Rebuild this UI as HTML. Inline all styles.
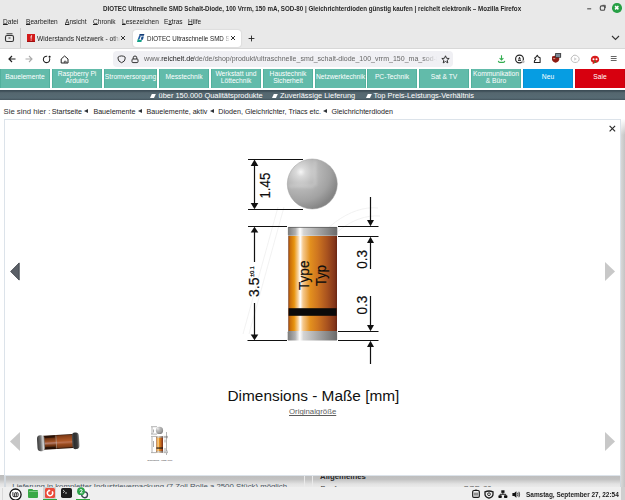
<!DOCTYPE html>
<html><head><meta charset="utf-8">
<style>
*{margin:0;padding:0;box-sizing:border-box}
html,body{width:625px;height:500px;overflow:hidden;background:#fff;font-family:"Liberation Sans",sans-serif}
.a{position:absolute}
.t{position:absolute;white-space:nowrap;line-height:1}
#chrome{left:0;top:0;width:625px;height:49px;background:#e9e9e9}
.menu{font-size:7.3px;color:#222;top:17.7px;transform-origin:0 0;transform:scaleX(0.9)}
.menu u{text-decoration:underline;text-underline-offset:0.2px;text-decoration-thickness:0.7px;text-decoration-skip-ink:none}
.sq{width:4px;height:3.6px;background:#fff;transform:skewX(-25deg)}
.usp{top:92px;font-size:7.45px;color:#fff}
.bc{top:108.5px;font-size:7.15px;color:#1c1c1c}
.tri{position:absolute;top:109px;width:0;height:0;border-top:2.45px solid transparent;border-bottom:2.45px solid transparent;border-right:4.7px solid #2e3338}
.nb{position:absolute;top:69px;height:19px;background:#62bbaa;border-left:1px solid #52b09d;border-right:1px solid #52b09d;color:#fff;font-size:6.7px;text-align:center;line-height:6.5px;display:flex;align-items:center;justify-content:center;padding-bottom:2px}
</style></head><body>

<!-- browser chrome -->
<div class="a" id="chrome"></div>
<div class="t" style="left:103px;top:4.5px;font-size:7px;font-weight:bold;color:#262626;transform-origin:0 0;transform:scaleX(0.886)">DIOTEC Ultraschnelle SMD Schalt-Diode, 100 Vrrm, 150 mA, SOD-80 | Gleichrichterdioden günstig kaufen | reichelt elektronik – Mozilla Firefox</div>
<!-- window controls -->
<svg class="a" style="left:585px;top:4px" width="36" height="10">
<path d="M2.2 4.8H6.2" stroke="#5a5a5a" stroke-width="1.2"/>
<rect x="15.3" y="1.9" width="4.4" height="4.4" rx="1.3" fill="none" stroke="#4a4a4a" stroke-width="1.1"/><path d="M17.5 1.3H20.3V4" fill="none" stroke="#4a4a4a" stroke-width="0.9"/>
</svg>
<div class="a" style="left:612px;top:3.2px;width:9.5px;height:9.5px;border-radius:50%;background:#27a045"></div>
<svg class="a" style="left:612px;top:3.2px" width="10" height="10"><path d="M3.1 3.1L6.4 6.4M6.4 3.1L3.1 6.4" stroke="#fff" stroke-width="1.5"/></svg>

<!-- menu -->
<div class="t menu" style="left:3px"><u>D</u>atei</div>
<div class="t menu" style="left:25.5px"><u>B</u>earbeiten</div>
<div class="t menu" style="left:64.5px"><u>A</u>nsicht</div>
<div class="t menu" style="left:92.5px"><u>C</u>hronik</div>
<div class="t menu" style="left:122px"><u>L</u>esezeichen</div>
<div class="t menu" style="left:164px">E<u>x</u>tras</div>
<div class="t menu" style="left:188px"><u>H</u>ilfe</div>

<!-- tab bar -->
<svg class="a" style="left:4px;top:32px" width="12" height="12"><rect x="1.5" y="3.5" width="8" height="6" rx="1.5" fill="none" stroke="#333" stroke-width="1.1"/><path d="M2.5 1.8H8.5" stroke="#333" stroke-width="1"/><path d="M4.5 6H6.5" stroke="#333" stroke-width="1"/></svg>
<div class="a" style="left:20px;top:28px;width:1px;height:20px;background:#c8c8c8"></div>
<div class="a" style="left:27px;top:34px;width:8px;height:8px;background:#d31b1b"></div>
<svg class="a" style="left:27px;top:34px" width="8" height="8"><rect y="6.9" width="8" height="1.1" fill="#9e0e0e"/><path d="M4.6 1.3C4 1.5 3.6 2.2 3.6 3.2L3.9 5.3H4.4L4.6 3.2C4.6 2.5 4.8 2 5.2 1.6Z" fill="#fff"/><circle cx="4.1" cy="6.1" r=".55" fill="#fff"/></svg>
<div class="a" style="left:37px;top:34px;width:83px;height:9px;overflow:hidden;-webkit-mask-image:linear-gradient(90deg,#000 76px,transparent 83px)"><div class="t" style="left:0;top:1px;font-size:7px;color:#222;transform-origin:0 0;transform:scaleX(0.951)">Widerstands Netzwerk - other</div></div>
<svg class="a" style="left:120px;top:35px" width="6" height="6"><path d="M1 1L5 5M5 1L1 5" stroke="#333" stroke-width="1"/></svg>
<div class="a" style="left:132.5px;top:30px;width:108px;height:17px;background:#fff;border-radius:3px;box-shadow:0 0 1.5px rgba(0,0,0,.22)"></div>
<svg class="a" style="left:137px;top:34px" width="8" height="8"><path d="M2.6 0H7.4L6.9 1.7H2.1Z" fill="#163f7a"/><path d="M2.1 1.7H3.9L2.4 5.6H0.7Z" fill="#1f5aa0"/><path d="M4.6 2.4H6.8L5.9 5.8H3.7Z" fill="#1a4d8c"/><path d="M0.7 5.2H2.4L2.1 6.1H4.9L4.4 7.9H0Z" fill="#14a088"/></svg>
<div class="a" style="left:147px;top:34px;width:83px;height:9px;overflow:hidden;-webkit-mask-image:linear-gradient(90deg,#000 76px,transparent 83px)"><div class="t" style="left:0;top:1px;font-size:7px;color:#222;transform-origin:0 0;transform:scaleX(0.89)">DIOTEC Ultraschnelle SMD Schalt</div></div>
<svg class="a" style="left:230px;top:35px" width="6" height="6"><path d="M1 1L5 5M5 1L1 5" stroke="#333" stroke-width="1"/></svg>
<svg class="a" style="left:247px;top:34px" width="9" height="9"><path d="M4.5 1.6V7.4M1.6 4.5H7.4" stroke="#222" stroke-width="0.9"/></svg>
<svg class="a" style="left:611px;top:35px" width="9" height="6"><path d="M1 1L4.5 4.5L8 1" fill="none" stroke="#333" stroke-width="1.1"/></svg>

<!-- nav bar -->
<div class="a" style="left:0;top:48px;width:625px;height:1px;background:#d8d8d8"></div>
<div class="a" style="left:0;top:49px;width:625px;height:20px;background:#fff"></div>
<svg class="a" style="left:8px;top:55px" width="8" height="8"><path d="M7.5 4H1M4 1L1 4L4 7" fill="none" stroke="#222" stroke-width="1.2"/></svg>
<svg class="a" style="left:25px;top:55px" width="8" height="8"><path d="M0.5 4H7M4 1L7 4L4 7" fill="none" stroke="#aaa" stroke-width="1.1"/></svg>
<svg class="a" style="left:42px;top:55px" width="10" height="9"><path d="M7.5 3.2A3.2 3.2 0 1 1 5.2 1.3" fill="none" stroke="#222" stroke-width="1.05"/><circle cx="7.6" cy="1.7" r="1.05" fill="#111"/></svg>
<svg class="a" style="left:59.5px;top:55px" width="10" height="9"><path d="M1.2 4L4.6 1L8 4V8H1.2Z" fill="none" stroke="#222" stroke-width="1" stroke-linejoin="round"/><path d="M4.3 8V6.2H6.1V8" fill="none" stroke="#222" stroke-width=".7"/></svg>
<div class="a" style="left:113px;top:51px;width:340px;height:16px;background:#f0f0f4;border-radius:4px"></div>
<svg class="a" style="left:116.5px;top:54.5px" width="10" height="9"><path d="M4.6 0.9Q6.9 1 8.1 2.1V3.9Q8.1 6.4 4.6 7.7Q1.1 6.4 1.1 3.9V2.1Q2.3 1 4.6 0.9Z" fill="none" stroke="#333" stroke-width="1"/></svg>
<svg class="a" style="left:131px;top:54.5px" width="8" height="9"><rect x="1" y="4" width="6" height="3.6" rx="0.9" fill="none" stroke="#333" stroke-width="1"/><path d="M2.2 4V2.8A1.8 1.8 0 0 1 5.8 2.8V4" fill="none" stroke="#333" stroke-width="1"/></svg>
<div class="a" style="left:143.5px;top:53px;width:293px;height:12px;overflow:hidden;-webkit-mask-image:linear-gradient(90deg,#000 95%,transparent)"><div class="t" style="left:0;top:2px;font-size:7.6px;color:#666;transform-origin:0 0;transform:scaleX(0.945)">www.<span style="color:#1a1a1a">reichelt.de</span></div><div class="t" style="left:49.8px;top:2px;font-size:7.6px;color:#666;transform-origin:0 0;transform:scaleX(0.925)">/de/de/shop/produkt/ultraschnelle_smd_schalt-diode_100_vrrm_150_ma_sod-80</div></div>
<svg class="a" style="left:441px;top:55px" width="9" height="9"><path d="M4.5 0.8L5.6 3.3L8.2 3.5L6.2 5.2L6.8 7.9L4.5 6.5L2.2 7.9L2.8 5.2L0.8 3.5L3.4 3.3Z" fill="none" stroke="#222" stroke-width="0.9"/></svg>
<!-- right icons -->
<svg class="a" style="left:494px;top:52px" width="15" height="14"><path d="M7.5 3.2V7.6M5.6 6.2L7.5 7.9L9.4 6.2" fill="none" stroke="#33ad50" stroke-width="1.1"/><path d="M4.3 8.8Q4.6 10.3 5.8 10.4H9.3Q10.5 10.3 10.8 8.8" fill="none" stroke="#33ad50" stroke-width="1.1"/></svg>
<svg class="a" style="left:512px;top:52px" width="16" height="14"><circle cx="7.5" cy="7" r="3.9" fill="none" stroke="#222" stroke-width="1.15"/><path d="M7.5 4.8L8.9 6.7H6.1Z" fill="#111"/><rect x="6" y="7.6" width="3" height="1.2" fill="#111"/><circle cx="11" cy="9.6" r="1.6" fill="#bbb"/></svg>
<svg class="a" style="left:530px;top:52px" width="15" height="14"><path d="M4.3 10.4H10.1V5.7L8.4 5L7.3 3.3L6.1 4.9L4.6 6.2L5.8 7.5L4.5 8.7Z" fill="none" stroke="#222" stroke-width="1.05" stroke-linejoin="round"/></svg>
<svg class="a" style="left:548px;top:50px" width="16" height="16"><path d="M4 6.4L7.6 5.4L11.2 6.4V9.3C11.2 11 9.5 12.3 7.6 12.8C5.7 12.3 4 11 4 9.3Z" fill="#8e1a12"/><path d="M5.2 8.6H7.2" stroke="#e8b0a0" stroke-width=".9"/><rect x="7.1" y="3" width="6" height="4.8" rx=".6" fill="#3e3e3e"/><rect x="8" y="3.8" width="4.2" height="3.2" fill="#7a8896"/></svg>
<svg class="a" style="left:569px;top:53px" width="12" height="12"><path d="M4 2.8C5 1.8 7 2 8.5 3.2C10.3 4.6 10.6 6.6 9.5 8C8.5 9.4 6.3 9.9 4.5 9.2C2.6 8.5 2 6.4 2.2 5Z" fill="none" stroke="#bdbdbd" stroke-width="1"/><path d="M5.2 4.3V7.7L7.8 6Z" fill="#d0d0d0"/></svg>
<svg class="a" style="left:590px;top:54.5px" width="10" height="10"><path d="M5 0.8C7.5 0.8 9.2 2.4 9.2 4.4C9.2 6.4 7.5 8 5 8L2.5 9.3L3 7.6C1.6 7 0.8 5.8 0.8 4.4C0.8 2.4 2.5 0.8 5 0.8Z" fill="#d81b1b"/><circle cx="3.5" cy="4.3" r="1" fill="#fff"/><circle cx="6.5" cy="4.3" r="1" fill="#fff"/><path d="M4.5 5.5L5.5 8" stroke="#1a9a3a" stroke-width="1"/></svg>
<svg class="a" style="left:609.5px;top:55px" width="8" height="8"><path d="M0.8 1.5H6.6M0.8 3.5H6.6M0.8 5.5H6.6" stroke="#555" stroke-width="0.9"/></svg>

<!-- site nav -->
<div class="nb" style="left:0;width:50px">Bauelemente</div>
<div class="nb" style="left:52px;width:50px">Raspberry Pi<br>Arduino</div>
<div class="nb" style="left:104px;width:53px">Stromversorgung</div>
<div class="nb" style="left:159px;width:50px">Messtechnik</div>
<div class="nb" style="left:211px;width:50px">Werkstatt und<br>Löttechnik</div>
<div class="nb" style="left:263px;width:50px">Haustechnik<br>Sicherheit</div>
<div class="nb" style="left:315px;width:51px">Netzwerktechnik</div>
<div class="nb" style="left:367px;width:50px">PC-Technik</div>
<div class="nb" style="left:419px;width:50px">Sat &amp; TV</div>
<div class="nb" style="left:471px;width:50px">Kommunikation<br>&amp; Büro</div>
<div class="nb" style="left:523px;width:50px;background:#069de2;border-color:#0890d0">Neu</div>
<div class="nb" style="left:575px;width:50px;background:#d7000f;border-color:#c8000e">Sale</div>

<!-- usp bar -->
<div class="a" style="left:0;top:90px;width:625px;height:10px;background:linear-gradient(#3c4d56 0,#3c4d56 10%,#55676f 28%,#566a73 80%,#43545d 100%)"></div>
<div class="a sq" style="left:151px;top:94px"></div>
<div class="t usp" style="left:158.5px">über 150.000 Qualitätsprodukte</div>
<div class="a sq" style="left:273px;top:94px"></div>
<div class="t usp" style="left:280px">Zuverlässige Lieferung</div>
<div class="a sq" style="left:366.5px;top:94px"></div>
<div class="t usp" style="left:373.5px">Top Preis-Leistungs-Verhältnis</div>

<!-- breadcrumb -->
<div class="t bc" style="left:3.5px;top:107.9px;font-size:7.75px;color:#333">Sie sind hier :</div>
<div class="t bc" style="left:51.8px">Startseite</div><div class="tri" style="left:84px"></div>
<div class="t bc" style="left:93.4px">Bauelemente</div><div class="tri" style="left:138px"></div>
<div class="t bc" style="left:146.6px">Bauelemente, aktiv</div><div class="tri" style="left:210px"></div>
<div class="t bc" style="left:218.3px">Dioden, Gleichrichter, Triacs etc.</div><div class="tri" style="left:323px"></div>
<div class="t bc" style="left:331.4px">Gleichrichterdioden</div>

<!-- page behind (bottom) -->
<div class="a" style="left:0;top:475px;width:625px;height:12px;background:linear-gradient(#bdbdbd 0,#c1c1c1 35%,#e2e2e2 75%,#eaeaea 100%)"></div>
<div class="t" style="left:12.3px;top:482.6px;font-size:7.8px;color:#46525c">Lieferung in kompletter Industrieverpackung (7 Zoll Rolle a 2500 Stück) möglich</div>
<div class="t" style="left:320px;top:472.6px;font-size:7.8px;color:#2a2a2a;font-weight:bold">Allgemeines</div>
<div class="t" style="left:320.5px;top:484.6px;font-size:7.8px;color:#3a3a3a">Bauform</div><div class="t" style="left:463.5px;top:484.6px;font-size:7.8px;color:#5a5a5a">SOD-80</div>
<div class="a" style="left:304px;top:475px;width:1px;height:12px;background:#eaeaea"></div><div class="a" style="left:311.7px;top:475px;width:1px;height:12px;background:#eaeaea"></div>
<div class="a" style="left:621px;top:119px;width:4px;height:368px;background:linear-gradient(90deg,#d8d8d8,#c4c4c4)"></div>
<div class="a" style="left:621px;top:119px;width:4px;height:16px;background:linear-gradient(#fff,rgba(255,255,255,0))"></div>

<div class="a" style="left:4px;top:470px;width:1.5px;height:17px;background:#d2d8de"></div>
<div class="a" style="left:619.5px;top:470px;width:1.5px;height:17px;background:#d2d8de"></div>
<!-- lightbox -->
<div class="a" style="left:4px;top:119px;width:617px;height:357px;background:#fff;border:1.2px solid #dce3ea"></div>
<svg class="a" style="left:609px;top:125px" width="7" height="7"><path d="M0.6 0.9L6.1 6.4M6.1 0.9L0.6 6.4" stroke="#2a2a2a" stroke-width="1.15"/></svg>
<svg class="a" style="left:10px;top:261.5px" width="10" height="19"><path d="M9.2 0.9L0.7 9.5L9.2 18.1Z" fill="#5b6067" stroke="#3e4349" stroke-width="0.9" stroke-linejoin="round"/></svg>
<svg class="a" style="left:605px;top:261.5px" width="10" height="19"><path d="M0 0L10 9.5L0 19Z" fill="#c8c8c8"/></svg>

<!-- diagram -->
<svg class="a" style="left:240px;top:150px" width="150" height="220" viewBox="240 150 150 220">
<defs>
<filter id="bl" x="-20%" y="-20%" width="140%" height="140%"><feGaussianBlur stdDeviation="1.2"/></filter>
<radialGradient id="sph" cx="0.27" cy="0.26" r="0.78"><stop offset="0" stop-color="#f6f6f6"/><stop offset="0.12" stop-color="#dadada"/><stop offset="0.4" stop-color="#b9b9b9"/><stop offset="0.75" stop-color="#a2a2a2"/><stop offset="1" stop-color="#858585"/></radialGradient>
<linearGradient id="sphv" x1="0" x2="1"><stop offset="0" stop-color="#000" stop-opacity="0"/><stop offset="0.55" stop-color="#000" stop-opacity="0"/><stop offset="0.58" stop-color="#fff" stop-opacity="0.15"/><stop offset="1" stop-color="#000" stop-opacity="0.12"/></linearGradient>
<linearGradient id="body" x1="0" x2="1"><stop offset="0" stop-color="#6e2c0e"/><stop offset="0.03" stop-color="#c66a0c"/><stop offset="0.12" stop-color="#e8940f"/><stop offset="0.2" stop-color="#f7d09a"/><stop offset="0.245" stop-color="#ffffff"/><stop offset="0.3" stop-color="#f6c98e"/><stop offset="0.45" stop-color="#e3901e"/><stop offset="0.6" stop-color="#cf7620"/><stop offset="0.8" stop-color="#a8521f"/><stop offset="0.95" stop-color="#83361a"/><stop offset="1" stop-color="#6a2512"/></linearGradient>
<linearGradient id="cap" x1="0" x2="1"><stop offset="0" stop-color="#7a7a7a"/><stop offset="0.15" stop-color="#b0b0b0"/><stop offset="0.245" stop-color="#ffffff"/><stop offset="0.32" stop-color="#d4d4d4"/><stop offset="0.6" stop-color="#a8a8a8"/><stop offset="1" stop-color="#6a6a6a"/></linearGradient>
</defs>
<g stroke="#efefef" stroke-width="0.8" fill="none"><path d="M278 207L243 334M284 207L249 334"/><path d="M303 262C318 230 350 205 378 208M313 262C328 236 352 214 380 216"/></g>
<circle cx="312.3" cy="184" r="25" fill="url(#sph)" stroke="#999" stroke-width="0.5"/><path d="M315 161V186M289 186H314" stroke="#fff" stroke-opacity=".14" stroke-width="4" filter="url(#bl)"/>
<g stroke="#111" stroke-width="1.2" fill="none">
<path d="M248 159.5H303M248 209.5H303"/>
<path d="M254.5 164V205"/>
<path d="M248 226.5H287M247.5 340.5H287"/>
<path d="M254.5 231V262M254.5 303V336"/>
<path d="M338 226.5H378.5M338 236.5H378.5M338 331.5H378.5M338 340.5H378.5"/>
<path d="M370.5 197V221M370.5 242V269M370.5 296V326M370.5 346V364"/>
</g>
<g fill="#111">
<path d="M250.7 166L254.5 159.6L258.3 166Z"/><path d="M250.7 203L254.5 209.3L258.3 203Z"/>
<path d="M250.7 232.5L254.5 226.8L258.3 232.5Z"/><path d="M250.7 334.5L254.5 340.2L258.3 334.5Z"/>
<path d="M367 220L370.5 226.3L374 220Z"/><path d="M367 243L370.5 236.8L374 243Z"/>
<path d="M367 325L370.5 331.3L374 325Z"/><path d="M367 347L370.5 340.8L374 347Z"/>
</g>
<rect x="288.3" y="236" width="48.7" height="95.5" fill="url(#body)"/>
<rect x="288.6" y="308.2" width="48" height="7.6" fill="#0a0a0a"/>
<rect x="287.9" y="227" width="49.4" height="8.8" rx="0.8" fill="url(#cap)"/><path d="M288.3 227.4H337" stroke="#555" stroke-width="0.7"/>
<rect x="287.7" y="331" width="49.4" height="9.6" rx="1.2" fill="url(#cap)"/>
<g font-family="Liberation Sans" fill="#0d0d0d" stroke="#0d0d0d" stroke-width="0.2">
<text transform="translate(269.6,198.6) rotate(-90)" font-size="14.5" textLength="26" lengthAdjust="spacingAndGlyphs">1.45</text>
<text transform="translate(259.4,297) rotate(-90)" font-size="15" textLength="19.4" lengthAdjust="spacingAndGlyphs">3.5</text>
<text transform="translate(254.3,276.7) rotate(-90)" font-size="4.8" textLength="10.5" lengthAdjust="spacingAndGlyphs">±0.1</text>
<text transform="translate(308.9,289.9) rotate(-90)" font-size="15.5" textLength="29.3" lengthAdjust="spacingAndGlyphs">Type</text>
<text transform="translate(325.9,285.9) rotate(-90)" font-size="15" textLength="20.8" lengthAdjust="spacingAndGlyphs">Typ</text>
<text transform="translate(366.6,268.8) rotate(-90)" font-size="15.5" textLength="18.8" lengthAdjust="spacingAndGlyphs">0.3</text>
<text transform="translate(366.6,314.5) rotate(-90)" font-size="15.5" textLength="18.8" lengthAdjust="spacingAndGlyphs">0.3</text>
</g>
</svg>

<div class="t" style="left:227.5px;top:387.6px;font-size:15.4px;color:#111">Dimensions - Maße [mm]</div>
<div class="t" style="left:289px;top:408px;font-size:7.8px;color:#5c5c5c;text-decoration:underline;text-decoration-skip-ink:none;text-underline-offset:0.6px;text-decoration-thickness:0.6px">Originalgröße</div>

<!-- thumbnails -->
<svg class="a" style="left:10px;top:432px" width="10" height="19"><path d="M10 0L0 9.5L10 19Z" fill="#c8c8c8"/></svg>
<svg class="a" style="left:605px;top:432px" width="10" height="19"><path d="M0 0L10 9.5L0 19Z" fill="#c8c8c8"/></svg>
<svg class="a" style="left:34px;top:429px" width="48" height="26" viewBox="0 0 48 26">
<defs>
<linearGradient id="gb" x1="0" y1="0" x2="0" y2="1"><stop offset="0" stop-color="#2a1206"/><stop offset=".2" stop-color="#6a3010"/><stop offset=".45" stop-color="#a05226"/><stop offset=".55" stop-color="#b88070"/><stop offset=".7" stop-color="#7a3a14"/><stop offset="1" stop-color="#241006"/></linearGradient>
<linearGradient id="gc" x1="0" y1="0" x2="1" y2="0"><stop offset="0" stop-color="#3a3a3a"/><stop offset=".45" stop-color="#6e6e6e"/><stop offset=".8" stop-color="#d8d8d8"/><stop offset="1" stop-color="#707070"/></linearGradient>
<linearGradient id="gc2" x1="0" y1="0" x2="1" y2="0"><stop offset="0" stop-color="#505050"/><stop offset=".3" stop-color="#2e2e2e"/><stop offset=".7" stop-color="#3a3a3a"/><stop offset="1" stop-color="#8a8a8a"/></linearGradient>
</defs>
<g transform="rotate(-3.5 24 13)">
<rect x="9" y="5.8" width="31" height="14.2" rx="1" fill="url(#gb)"/>
<path d="M23 6.5H38.5V19H23Z" fill="#c0602a" opacity=".45"/>
<path d="M11 7.5L21 7.2M11 18.2L21 18.5" stroke="#150804" stroke-width="2" opacity=".6"/>
<path d="M22.3 6.2V19.5" stroke="#c9b4a8" stroke-width=".9" opacity=".6"/>
<rect x="3.2" y="5.2" width="7.5" height="16" rx="3.5" fill="url(#gc)"/>
<rect x="38.2" y="4.6" width="7" height="16.6" rx="3.3" fill="url(#gc2)"/>
</g>
</svg>
<svg class="a" style="left:146px;top:424px" width="28" height="40" viewBox="0 0 28 40">
<circle cx="13.5" cy="6.4" r="3.6" fill="url(#sph)"/>
<rect x="10.4" y="12.5" width="6.6" height="16" fill="url(#body)"/>
<rect x="10.4" y="23.5" width="6.6" height="1.1" fill="#111"/>
<rect x="10.4" y="12.3" width="6.6" height="1.4" fill="url(#cap)"/><rect x="10.4" y="27.2" width="6.6" height="1.4" fill="url(#cap)"/>
<path d="M5 2.7H11M5 10.1H11M5 12.4H10M5 28.6H10M17.5 12.4H22M17.5 13.7H22M17.5 27.2H22M17.5 28.6H22M6 3V10M6 13V28.3M20.5 8V27M20.5 29V31" stroke="#555" stroke-width=".45" fill="none"/>
<path d="M7.5 5.5V8.5M7.5 17V23M19 15.5V18.5M19 24V26.5" stroke="#888" stroke-width=".7"/>
<text x="1.6" y="36.8" font-size="2.3" font-family="Liberation Sans" fill="#333" textLength="24.8" lengthAdjust="spacingAndGlyphs">Dimensions - Maße [mm]</text>
</svg>

<!-- taskbar -->
<div class="a" style="left:0;top:487px;width:625px;height:13px;background:#efefef"></div>
<div class="a" style="left:621px;top:487px;width:4px;height:13px;background:#cfcfcf"></div>
<div class="a" style="left:2px;top:488px;width:1px;height:12px;background:#d8d8d8"></div>
<svg class="a" style="left:8px;top:487.5px" width="15" height="13"><circle cx="7.5" cy="6.6" r="5.6" fill="#fff" stroke="#111" stroke-width="1.3"/><path d="M4.9 4.1V7.6Q4.9 8.7 6 8.7H9Q10.1 8.7 10.1 7.6V5.6Q10.1 4.6 9.2 4.6Q8.3 4.6 8.3 5.6V8.5M6.6 8.5V5.6Q6.6 4.6 7.45 4.6Q8.3 4.6 8.3 5.6" fill="none" stroke="#111" stroke-width=".85"/></svg>
<div class="a" style="left:28px;top:490px;width:10px;height:7.5px;background:#3aa845;border-radius:1px"></div>
<div class="a" style="left:28px;top:488.8px;width:4.5px;height:2px;background:#3aa845;border-radius:1px 1px 0 0"></div>
<div class="a" style="left:28.5px;top:490.6px;width:9px;height:1px;background:#7cc884"></div>
<div class="a" style="left:43.3px;top:487.2px;width:12.6px;height:12px;background:#d2d2d2;border-radius:1px"></div>
<div class="a" style="left:44.6px;top:488.3px;width:10.4px;height:10px;background:#ea4b3a;border-radius:1.5px"></div>
<svg class="a" style="left:44.6px;top:488.3px" width="11" height="10"><path d="M7.2 3.4A2.7 2.7 0 1 1 4.3 2.4" fill="none" stroke="#fff" stroke-width="1.6"/><path d="M3.6 1.2L5.6 2.3L4 3.8Z" fill="#fff"/></svg>
<div class="a" style="left:42.5px;top:499px;width:14px;height:1px;background:#2fa83f"></div>
<div class="a" style="left:61.2px;top:488.2px;width:10.6px;height:10.2px;background:#1e1e1e;border-radius:1.8px"></div>
<svg class="a" style="left:61.2px;top:488.2px" width="11" height="10"><path d="M2 2L3.6 3.4L2 4.8" fill="none" stroke="#eee" stroke-width=".8"/><path d="M4 5H6" stroke="#eee" stroke-width=".8"/></svg>
<div class="a" style="left:77.5px;top:488px;width:11.5px;height:11px;background:#f8f8f8;border-radius:1px"></div>
<svg class="a" style="left:76px;top:487px" width="14" height="13"><circle cx="8.6" cy="7.8" r="2.9" fill="none" stroke="#3a4550" stroke-width="1.4"/><circle cx="5" cy="4.2" r="3.9" fill="#2da44a"/><path d="M3.6 3.2Q5 1.8 6.2 3Q6.6 4 4.2 5.8H6.6" fill="none" stroke="#fff" stroke-width=".9"/></svg>
<div class="a" style="left:75.8px;top:499px;width:14.6px;height:1px;background:#2fa83f"></div>
<!-- tray -->
<svg class="a" style="left:471px;top:489px" width="10" height="10"><rect x="1.7" y="1.5" width="6.6" height="6.9" rx="1.2" fill="none" stroke="#1a1a1a" stroke-width="1.2"/><path d="M4 3.6V6.6M6 3.6V6.6" stroke="#1a1a1a" stroke-width="0.9"/><rect x="3.8" y="0.6" width="2.4" height="1.3" fill="#1a1a1a"/></svg>
<svg class="a" style="left:483.5px;top:489.5px" width="10" height="10"><path d="M1 1.8Q5 0.2 9 1.8V4.2Q9 6.8 5 8.2Q1 6.8 1 4.2Z" fill="none" stroke="#1a1a1a" stroke-width="1.3"/><circle cx="5" cy="4.2" r="1.4" fill="none" stroke="#1a1a1a" stroke-width=".9"/></svg>
<svg class="a" style="left:497.8px;top:489.5px" width="10" height="9"><rect x="3.3" y="0.3" width="3.2" height="2.6" fill="#111"/><rect x="0.4" y="5.2" width="3.4" height="2.9" rx=".8" fill="#111"/><rect x="6" y="5.2" width="3.4" height="2.9" rx=".8" fill="#111"/><path d="M4.9 2.9V4.3M2.1 5.2V4.3H7.7V5.2" fill="none" stroke="#111" stroke-width=".9"/></svg>
<svg class="a" style="left:511.8px;top:490.5px" width="9" height="7"><path d="M0.4 2H2.2L4.4 0.3V6.7L2.2 5H0.4Z" fill="#111"/><path d="M5.6 1.8Q6.4 3.5 5.6 5.2M6.9 0.8Q8.2 3.5 6.9 6.2" fill="none" stroke="#111" stroke-width=".85"/></svg>
<div class="t" style="left:525.5px;top:491px;font-size:7px;font-weight:bold;color:#222;transform-origin:0 0;transform:scaleX(0.92)">Samstag, September 27, 22:54</div>

</body></html>
